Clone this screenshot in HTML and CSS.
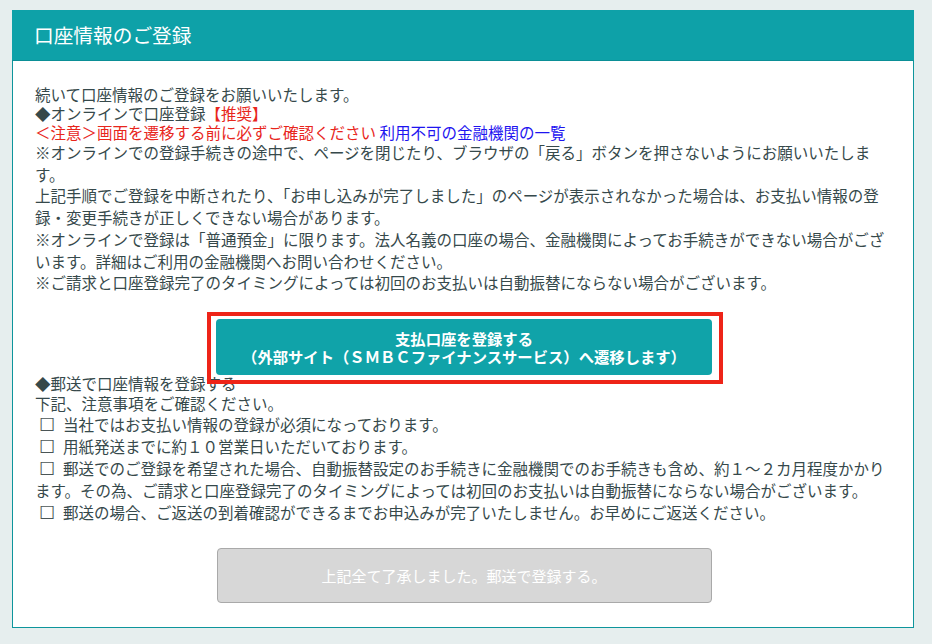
FILE: index.html
```html
<!DOCTYPE html>
<html lang="ja">
<head>
<meta charset="utf-8">
<title>口座情報のご登録</title>
<link rel="stylesheet" href="styles.css">
</head>
<body>
<div class="page">
  <section class="card">
    <header class="card-head">口座情報のご登録</header>
    <div class="card-body">
      <div class="intro">
        <div>続いて口座情報のご登録をお願いいたします。</div>
        <div>◆オンラインで口座登録<span class="red">【推奨】</span></div>
        <div><span class="red">＜注意＞画面を遷移する前に必ずご確認ください</span> <a class="link" href="#">利用不可の金融機関の一覧</a></div>
      </div>
      <div class="notes">
        <div>※オンラインでの登録手続きの途中で、ページを閉じたり、ブラウザの「戻る」ボタンを押さないようにお願いいたします。</div>
        <div>上記手順でご登録を中断されたり、「お申し込みが完了しました」のページが表示されなかった場合は、お支払い情報の登録・変更手続きが正しくできない場合があります。</div>
        <div>※オンラインで登録は「普通預金」に限ります。法人名義の口座の場合、金融機関によってお手続きができない場合がございます。詳細はご利用の金融機関へお問い合わせください。</div>
        <div>※ご請求と口座登録完了のタイミングによっては初回のお支払いは自動振替にならない場合がございます。</div>
      </div>
      <div class="btn-wrap">
        <button class="btn-primary" type="button">支払口座を登録する<br>（外部サイト（ＳＭＢＣファイナンスサービス）へ遷移します）</button>
        <span class="highlight"></span>
      </div>
      <div class="mail-head">
        <div>◆郵送で口座情報を登録する</div>
        <div>下記、注意事項をご確認ください。</div>
      </div>
      <div class="checks">
        <div><span class="cb">☐</span>当社ではお支払い情報の登録が必須になっております。</div>
        <div><span class="cb">☐</span>用紙発送までに約１０営業日いただいております。</div>
        <div><span class="cb">☐</span>郵送でのご登録を希望された場合、自動振替設定のお手続きに金融機関でのお手続きも含め、約１～２カ月程度かかります。その為、ご請求と口座登録完了のタイミングによっては初回のお支払いは自動振替にならない場合がございます。</div>
        <div><span class="cb">☐</span>郵送の場合、ご返送の到着確認ができるまでお申込みが完了いたしません。お早めにご返送ください。</div>
      </div>
      <div class="btn-row">
        <button class="btn-disabled" type="button" disabled>上記全て了承しました。郵送で登録する。</button>
      </div>
    </div>
  </section>
</div>
</body>
</html>
```

FILE: styles.css
```css
html, body {
  margin: 0;
  padding: 0;
}
body {
  background: #e6eeee;
  font-family: "Noto Sans CJK JP", "Noto Sans", sans-serif;
  color: #36494b;
  font-size: 15.5px;
  width: 932px;
  height: 644px;
  overflow: hidden;
}
.page {
  padding: 10px 18px 0 12px;
}
.card {
  width: 900px;
  background: #fff;
  border: 1px solid #0e959c;
  border-top: none;
}
.card-head {
  background: #0ea1a8;
  color: #fff;
  font-size: 19.7px;
  height: 50px;
  line-height: 50px;
  padding-left: 22px;
  border-bottom: 1px solid #0b8f96;
  margin: 0 -1px;
}
.card-body {
  padding: 24px 22px 24px 22px;
}
.intro {
  line-height: 19px;
}
.red {
  color: #e8261c;
}
.link {
  color: #1e14f0;
  text-decoration: none;
}
.notes {
  line-height: 21.7px;
}
.btn-wrap {
  position: relative;
  display: flex;
  justify-content: center;
  margin-top: 25px;
}
.btn-primary {
  width: 496px;
  height: 56px;
  background: #10a3a9;
  color: #fff;
  border: none;
  border-radius: 4px;
  font-family: inherit;
  font-size: 15.33px;
  font-weight: bold;
  line-height: 18px;
  padding: 0;
  margin-left: 2px;
}
.highlight {
  position: absolute;
  left: 172px;
  top: -7px;
  width: 508px;
  height: 64px;
  border: 4px solid #ee2418;
  pointer-events: none;
}
.mail-head {
  line-height: 20px;
  margin-top: -2px;
}
.checks {
  line-height: 22px;
}
.cb {
  display: inline-block;
  margin-left: 4px;
  margin-right: 8px;
  font-size: 17.5px;
  line-height: 22px;
  vertical-align: top;
  color: #4a5556;
}
.btn-row {
  display: flex;
  justify-content: center;
  margin-top: 25px;
}
.btn-disabled {
  width: 495px;
  height: 55px;
  background: #d7d7d7;
  border: 1px solid #a9a9a9;
  border-radius: 4px;
  color: #fff;
  font-family: inherit;
  font-size: 15px;
  padding: 0;
  margin-left: 2px;
}
```
